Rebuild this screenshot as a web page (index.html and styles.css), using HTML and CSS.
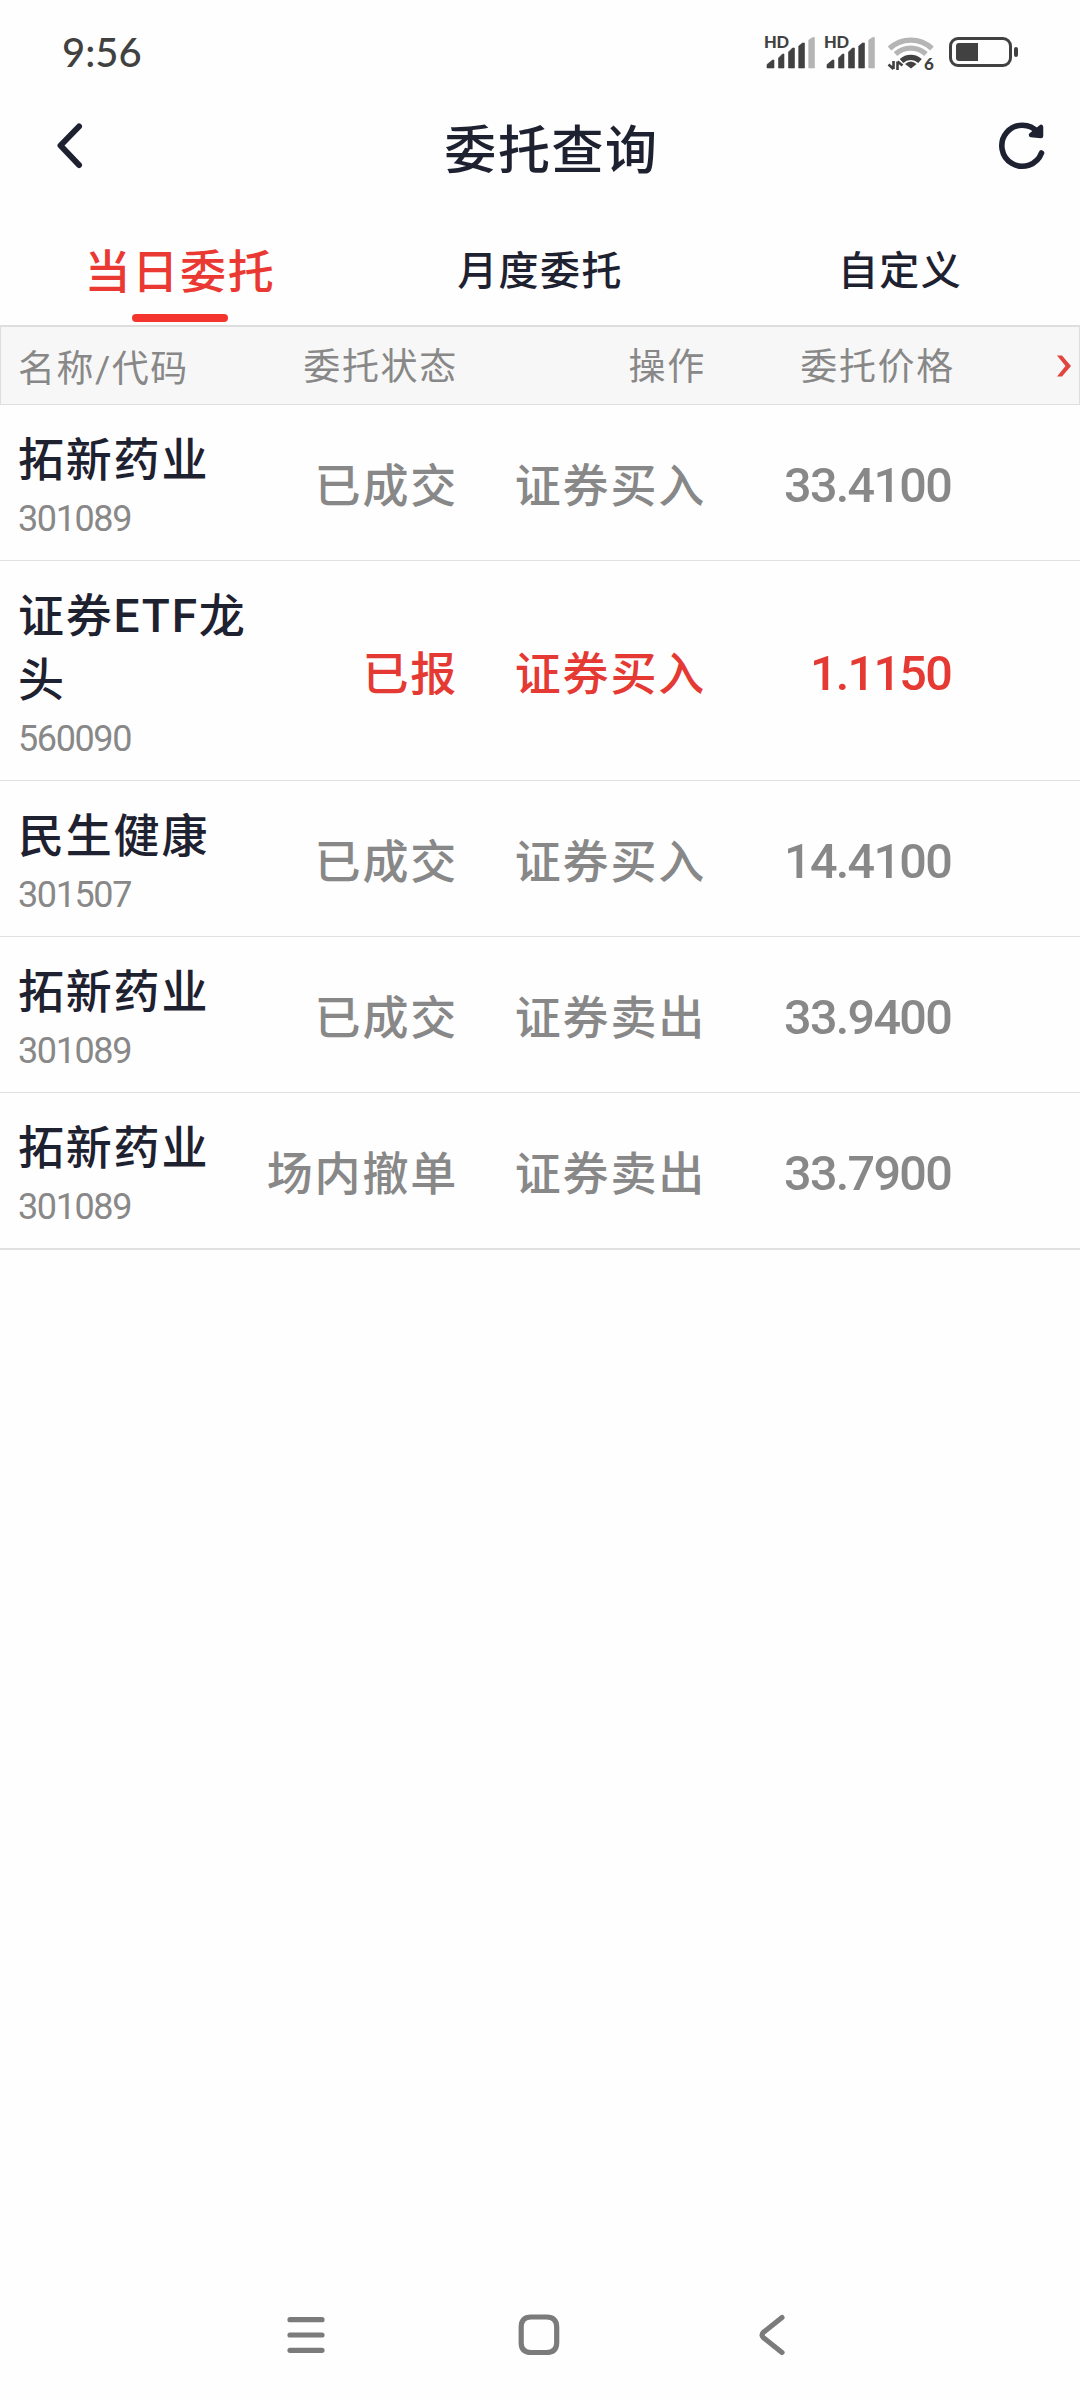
FILE: index.html
```html
<!DOCTYPE html>
<html lang="zh-CN">
<head>
    <meta charset="UTF-8">
    <meta name="viewport" content="width=device-width, initial-scale=1.0">
    <title>委托查询</title>
    <link rel="stylesheet" href="styles.css">
</head>
<body>
    <div class="page">
        <!-- 状态栏 -->
        <div class="status-bar">
            <span class="time">9:56</span>
            <svg class="status-icons" width="260" height="44" viewBox="760 30 260 44">
                <g id="signal">
                    <text class="hd" x="764" y="48" textLength="25">HD</text>
                    <path d="M767 68v-3.500l5.500-4.500h1.500v8zM778.500 68v-10l4-4h1.500v14zM788.500 68v-16l4-4h2v20zM798.700 68v-22l3.800-3h2v25z" fill="#414141" stroke="#414141" stroke-width=".6" stroke-linejoin="round"/>
                    <path d="M808.700 68v-28l3.800-2.500h2v30.500z" fill="#b5b5b5" stroke="#b5b5b5" stroke-width=".6" stroke-linejoin="round"/>
                </g>
                <use href="#signal" x="60"/>
                <g fill="none" stroke-width="5.200">
                    <path d="M889.500 48.500A31 31 0 0 1 932 48.500" stroke="#b5b5b5"/>
                    <path d="M895.500 54A22.500 22.500 0 0 1 926 54" stroke="#b5b5b5"/>
                    <path d="M901.500 61A13.500 13.500 0 0 1 920 61" stroke="#414141"/>
                </g>
                <path d="M905 64q5.800-5 11.600 0L911 68.500z" fill="#414141"/>
                <path d="M893.500 61v8M893.500 69l-5-4.500M897.500 70v-8.500M897.500 61.500l5 4" fill="none" stroke="#414141" stroke-width="2.600"/>
                <text class="wifi-six" x="924" y="69.500">6</text>
                <rect x="950.500" y="38.500" width="60" height="27" rx="7.500" fill="none" stroke="#414141" stroke-width="3"/>
                <path d="M959 43h19v18h-19q-3 0-3-3v-12q0-3 3-3z" fill="#414141"/>
                <rect x="1014" y="47" width="4" height="10" rx="2" fill="#414141"/>
            </svg>
        </div>

        <!-- 标题栏 -->
        <div class="title-bar">
            <svg width="34" height="54" viewBox="0 0 34 54">
                <path d="M26 7.500L7.500 26.500l18.500 19.500" fill="none" stroke="#1e2130" stroke-width="6" stroke-linecap="round" stroke-linejoin="round"/>
            </svg>
            <h1>委托查询</h1>
            <svg width="54" height="54" viewBox="0 0 54 54">
                <path d="M46.500 34A20.500 20.500 0 1 1 43 13.500" fill="none" stroke="#1e2130" stroke-width="5.600" stroke-linecap="round"/>
                <path d="M36 16L46 8v9z" fill="#1e2130" stroke="#1e2130" stroke-width="4.500" stroke-linejoin="round"/>
            </svg>
        </div>

        <div class="tabs">
            <div class="tab active">当日委托</div>
            <div class="tab">月度委托</div>
            <div class="tab">自定义</div>
        </div>

        <!-- 表头 -->
        <div class="row table-head">
            <div>名称/代码</div>
            <div class="cell">委托状态</div>
            <div class="cell">操作</div>
            <div class="cell">委托价格</div>
            <svg class="more" width="16" height="24" viewBox="0 0 16 24">
                <path d="M1 1.500h5L15 12 6 22.500H1L9.500 12z" fill="#e0453e"/>
            </svg>
        </div>

        <!-- 委托列表 -->
        <div class="list">
            <div class="row">
                <div class="stock"><p class="name">拓新药业</p><p class="code">301089</p></div>
                <div class="cell">已成交</div>
                <div class="cell">证券买入</div>
                <div class="cell price">33.4100</div>
            </div>
            <div class="row pending">
                <div class="stock"><p class="name">证券ETF龙头</p><p class="code">560090</p></div>
                <div class="cell">已报</div>
                <div class="cell">证券买入</div>
                <div class="cell price">1.1150</div>
            </div>
            <div class="row">
                <div class="stock"><p class="name">民生健康</p><p class="code">301507</p></div>
                <div class="cell">已成交</div>
                <div class="cell">证券买入</div>
                <div class="cell price">14.4100</div>
            </div>
            <div class="row">
                <div class="stock"><p class="name">拓新药业</p><p class="code">301089</p></div>
                <div class="cell">已成交</div>
                <div class="cell">证券卖出</div>
                <div class="cell price">33.9400</div>
            </div>
            <div class="row">
                <div class="stock"><p class="name">拓新药业</p><p class="code">301089</p></div>
                <div class="cell">场内撤单</div>
                <div class="cell">证券卖出</div>
                <div class="cell price">33.7900</div>
            </div>
        </div>

        <!-- 系统导航键 -->
        <div class="nav-bar">
            <svg width="48" height="48" viewBox="0 0 48 48">
                <path d="M7 8.700h32M7 24h32M7 39.300h32"/>
            </svg>
            <svg width="48" height="48" viewBox="0 0 48 48">
                <path d="M15 6H30.500Q40.500 6 40.700 16V32Q40.500 41.500 30.500 41.500H15Q5.300 41.500 5.200 32V16Q5.300 6 15 6z"/>
            </svg>
            <svg width="48" height="48" viewBox="0 0 48 48">
                <path d="M33 6.500L14.500 21.300Q11.500 24 14.500 26.700L33 41.500"/>
            </svg>
        </div>
    </div>
</body>
</html>
```
FILE: styles.css
```css
* {
    box-sizing: border-box;
    margin: 0;
    padding: 0;
}
body {
    background: #fefefe;
    color: #1e2130;
    font-family: Roboto, "Noto Sans CJK SC", sans-serif;
    font-weight: 500;
}
.page {
    display: flex;
    flex-direction: column;
    width: 1080px;
    height: 2400px;
}
svg {
    display: block;
}

/* 状态栏 */
.status-bar {
    display: flex;
    justify-content: space-between;
    height: 104px;
    padding: 30px 60px 0 62px;
}
.time {
    font-family: Lato, sans-serif;
    font-size: 40px;
    line-height: 44px;
    color: #414141;
}
.hd {
    font-family: Lato, sans-serif;
    font-size: 16.5px;
    font-weight: 900;
    fill: #414141;
}
.wifi-six {
    font-family: Lato, sans-serif;
    font-size: 17px;
    font-weight: 900;
    fill: #414141;
}

/* 标题栏 */
.title-bar {
    display: flex;
    align-items: center;
    justify-content: space-between;
    height: 84px;
    padding: 0 31px 0 53px;
}
.title-bar h1 {
    margin-left: 21px;
    font-family: "Noto Sans CJK SC", sans-serif;
    font-size: 52px;
    font-weight: 500;
    letter-spacing: 1.6px;
}

/* 选项卡 */
.tabs {
    display: grid;
    grid-template-columns: repeat(3, 1fr);
    height: 137px;
}
.tab {
    display: flex;
    flex-direction: column;
    align-items: center;
    padding-top: 50px;
    font-family: "Noto Sans CJK SC", sans-serif;
    font-size: 40px;
    line-height: 60px;
    letter-spacing: 1.4px;
}
.tab.active {
    font-size: 46px;
    letter-spacing: 1.8px;
    color: #ea3932;
}
.tab.active::after {
    content: "";
    width: 96px;
    height: 8px;
    margin-top: 16px;
    border-radius: 4px;
    background: #f5342e;
}

/* 列表 */
.row {
    display: grid;
    grid-template-columns: 240px 200px 248px 249px 1fr;
    align-items: center;
    padding: 22px 0 14px 18px;
    border-bottom: 1px solid #e1e1e1;
}
.table-head {
    height: 80px;
    padding: 0 7px 0 17px;
    border: 1px solid #dedede;
    border-top-width: 2px;
    background: #f7f7f7;
    font-size: 37px;
    font-weight: 400;
    letter-spacing: 1.5px;
    color: #888;
    white-space: nowrap;
}
.table-head .cell {
    padding: 5px 0 0;
    font-size: 37px;
    font-weight: 400;
    line-height: 56px;
    letter-spacing: 1.7px;
}
.more {
    justify-self: end;
}
.cell {
    padding-bottom: 2px;
    font-size: 46px;
    letter-spacing: 1.8px;
    line-height: 64px;
    text-align: right;
    white-space: nowrap;
    color: #888;
}
.name {
    font-size: 46px;
    line-height: 66px;
    letter-spacing: 1.8px;
}
/* 两行名称时行距保持 64px */
.pending .name {
    line-height: 64px;
    padding-top: 1px;
    padding-bottom: 1px;
}
.code {
    height: 53px;
    font-size: 36px;
    font-weight: 400;
    line-height: 53px;
    letter-spacing: -1.4px;
    color: #888;
}
.price {
    padding-right: 4px;
    font-size: 48.5px;
    letter-spacing: -1.7px;
}
.pending .cell {
    color: #e53a34;
}
.list .row:last-child {
    border-bottom-width: 2px;
}

/* 系统导航键 */
.nav-bar {
    display: flex;
    gap: 185px;
    margin-top: auto;
    padding: 0 0 41px 283px;
}
.nav-bar path {
    fill: none;
    stroke: #7b7b7b;
    stroke-width: 5.2;
    stroke-linecap: round;
}
```
